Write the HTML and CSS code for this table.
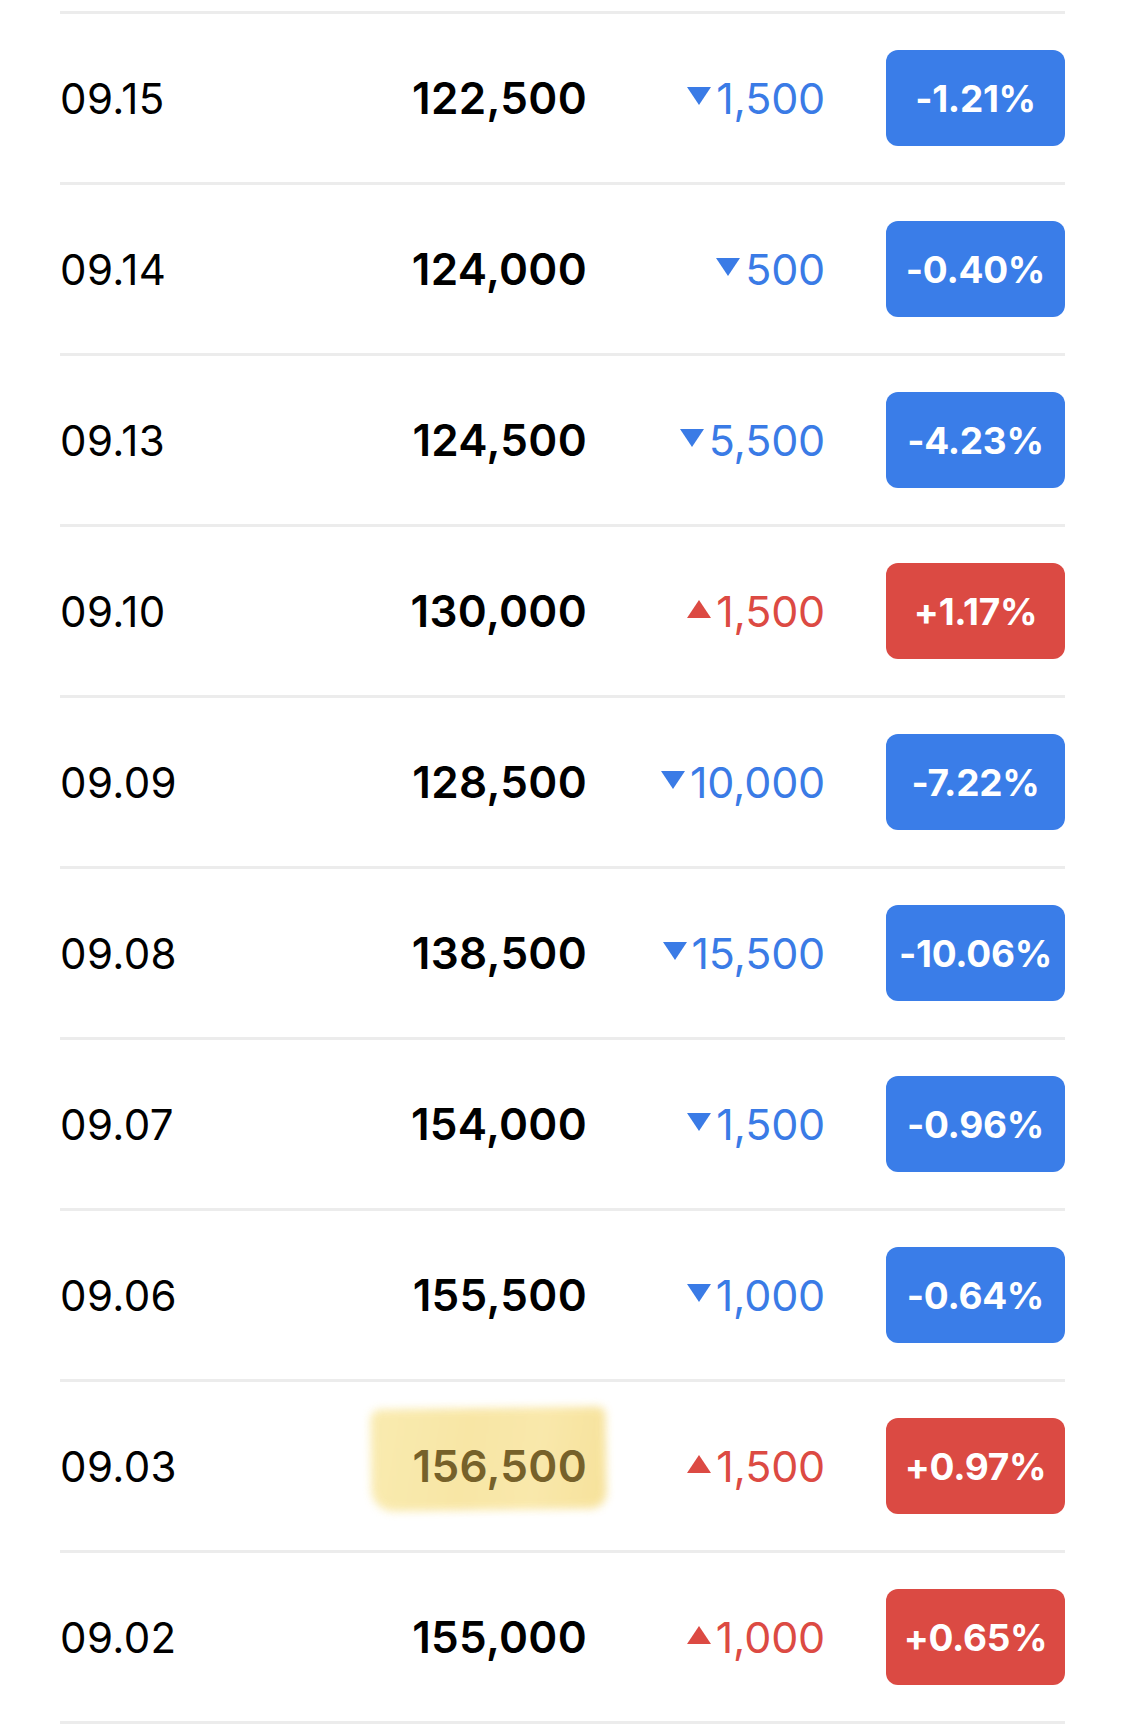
FILE: index.html
```html
<!DOCTYPE html>
<html lang="ko">
<head>
<meta charset="utf-8">
<title>시세</title>
<link rel="stylesheet" href="styles.css">
</head>
<body>
<div class="list">
  <div class="row">
    <div class="date">09.15</div>
    <div class="price">122,500</div>
    <div class="change down"><svg class="tri" viewBox="0 0 24 18"><polygon points="0,0 24,0 12,18"/></svg>1,500</div>
    <div class="badge down">-1.21%</div>
  </div>
  <div class="row">
    <div class="date">09.14</div>
    <div class="price">124,000</div>
    <div class="change down"><svg class="tri" viewBox="0 0 24 18"><polygon points="0,0 24,0 12,18"/></svg>500</div>
    <div class="badge down">-0.40%</div>
  </div>
  <div class="row">
    <div class="date">09.13</div>
    <div class="price">124,500</div>
    <div class="change down"><svg class="tri" viewBox="0 0 24 18"><polygon points="0,0 24,0 12,18"/></svg>5,500</div>
    <div class="badge down">-4.23%</div>
  </div>
  <div class="row">
    <div class="date">09.10</div>
    <div class="price">130,000</div>
    <div class="change up"><svg class="tri" viewBox="0 0 24 18"><polygon points="12,0 24,18 0,18"/></svg>1,500</div>
    <div class="badge up">+1.17%</div>
  </div>
  <div class="row">
    <div class="date">09.09</div>
    <div class="price">128,500</div>
    <div class="change down"><svg class="tri" viewBox="0 0 24 18"><polygon points="0,0 24,0 12,18"/></svg>10,000</div>
    <div class="badge down">-7.22%</div>
  </div>
  <div class="row">
    <div class="date">09.08</div>
    <div class="price">138,500</div>
    <div class="change down"><svg class="tri" viewBox="0 0 24 18"><polygon points="0,0 24,0 12,18"/></svg>15,500</div>
    <div class="badge down">-10.06%</div>
  </div>
  <div class="row">
    <div class="date">09.07</div>
    <div class="price">154,000</div>
    <div class="change down"><svg class="tri" viewBox="0 0 24 18"><polygon points="0,0 24,0 12,18"/></svg>1,500</div>
    <div class="badge down">-0.96%</div>
  </div>
  <div class="row">
    <div class="date">09.06</div>
    <div class="price">155,500</div>
    <div class="change down"><svg class="tri" viewBox="0 0 24 18"><polygon points="0,0 24,0 12,18"/></svg>1,000</div>
    <div class="badge down">-0.64%</div>
  </div>
  <div class="row">
    <div class="date">09.03</div>
    <div class="price marked"><span class="mark-text">156,500</span></div>
    <div class="change up"><svg class="tri" viewBox="0 0 24 18"><polygon points="12,0 24,18 0,18"/></svg>1,500</div>
    <div class="badge up">+0.97%</div>
  </div>
  <div class="row">
    <div class="date">09.02</div>
    <div class="price">155,000</div>
    <div class="change up"><svg class="tri" viewBox="0 0 24 18"><polygon points="12,0 24,18 0,18"/></svg>1,000</div>
    <div class="badge up">+0.65%</div>
  </div>
</div>
</body>
</html>
```
FILE: styles.css
```css
html, body {
  margin: 0;
  padding: 0;
  background: #ffffff;
}

body {
  font-family: Inter, "Noto Sans", "Liberation Sans", sans-serif;
  color: #000;
  padding: 11px 60px 0 60px;
}

.list {
  border-bottom: 3px solid #ececec;
}

.row {
  display: grid;
  grid-template-columns: 1fr 200px 238px 240px;
  align-items: center;
  height: 168px;
  border-top: 3px solid #ececec;
}

.date {
  font-size: 42px;
  font-weight: 400;
  letter-spacing: 0.4px;
}

.price {
  justify-self: end;
  font-size: 44px;
  font-weight: 600;
  letter-spacing: 0.3px;
  position: relative;
}

.change {
  justify-self: end;
  display: flex;
  align-items: center;
  font-size: 43px;
  font-weight: 400;
  letter-spacing: -0.2px;
}

.tri {
  width: 24px;
  height: 18px;
  margin-right: 5px;
  margin-top: -4px;
}

.change.down { color: #3a7be6; }
.change.down .tri { fill: #3a7be6; }
.change.up { color: #dc4a43; }
.change.up .tri { fill: #dc4a43; }

.badge {
  justify-self: end;
  width: 179px;
  height: 96px;
  border-radius: 12px;
  display: flex;
  align-items: center;
  justify-content: center;
  color: #fff;
  font-size: 37px;
  font-weight: 700;
  letter-spacing: -0.3px;
}

.badge.down { background: #3a7de8; }
.badge.up { background: #db4a43; }

.marked .mark-text {
  position: relative;
  color: #76612a;
}

.marked::before {
  content: "";
  position: absolute;
  left: -42px;
  right: -18px;
  top: -31px;
  bottom: -17px;
  background: linear-gradient(100deg, #f9e9a8 0%, #f8e49c 40%, #f9e6a2 70%, #f6df90 100%);
  opacity: 0.9;
  border-radius: 10px 8px 16px 22px;
  filter: blur(4px);
  transform: rotate(-0.8deg);
}
```
